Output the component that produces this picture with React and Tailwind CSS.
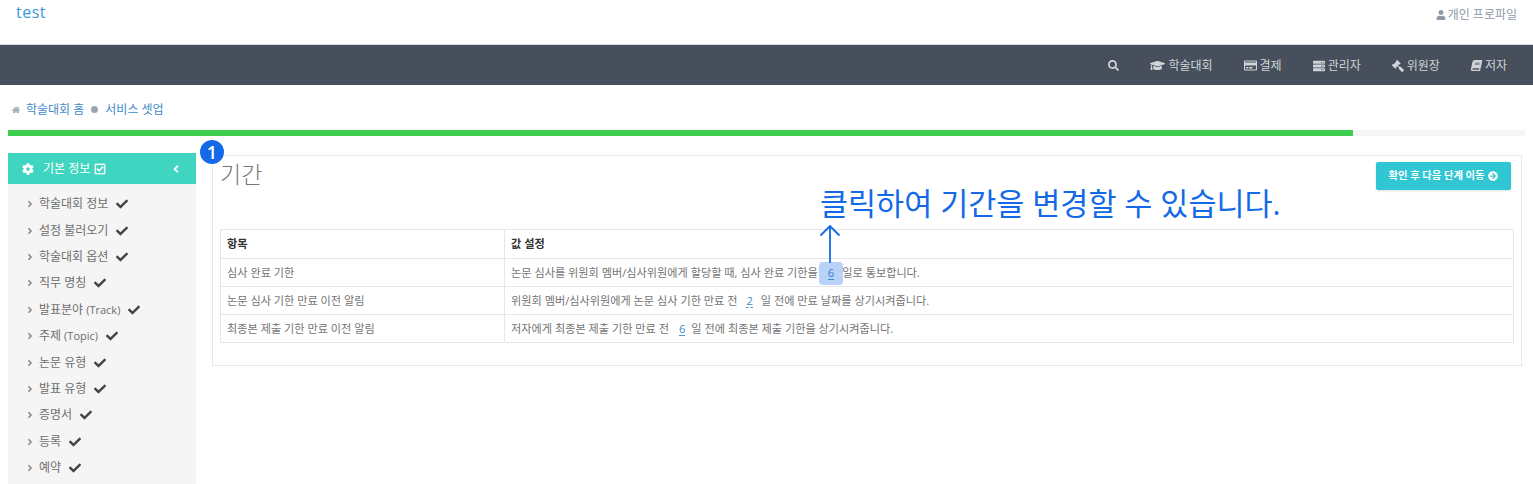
import React from "react";
import {
  FaUser,
  FaSearch,
  FaGraduationCap,
  FaRegCreditCard,
  FaServer,
  FaGavel,
  FaBook,
  FaCog,
  FaCheck,
  FaRegCheckSquare,
  FaAngleLeft,
  FaAngleRight,
  FaArrowCircleRight,
  FaHome,
} from "react-icons/fa";

const navItems = [
  { label: "학술대회", icon: FaGraduationCap, size: "text-[15px]" },
  { label: "결제", icon: FaRegCreditCard, size: "text-[13px]" },
  { label: "관리자", icon: FaServer, size: "text-[12px]" },
  { label: "위원장", icon: FaGavel, size: "text-[12px] -scale-x-100" },
  { label: "저자", icon: FaBook, size: "text-[11px] -skew-x-12" },
];

const sideItems = [
  { label: "학술대회 정보" },
  { label: "설정 불러오기" },
  { label: "학술대회 옵션" },
  { label: "직무 명칭" },
  { label: "발표분야", en: "(Track)" },
  { label: "주제", en: "(Topic)" },
  { label: "논문 유형" },
  { label: "발표 유형" },
  { label: "증명서" },
  { label: "등록" },
  { label: "예약" },
];

const Editable = ({ value, className = "" }) => (
  <span className={`inline-block border-b border-dashed border-[#3f9fd8] leading-[13px] text-[#428bca] ${className}`}>
    {value}
  </span>
);

export default function App() {
  return (
    <div className="relative h-[484px] overflow-hidden bg-white font-['Open_Sans','Noto_Sans_CJK_KR',sans-serif] text-[11px] text-[#747474]">
      {/* Top header */}
      <header className="flex h-[45px] items-start justify-between border-b border-[#dcdcdc] pl-4 pr-[16px]">
        <span className="mt-[1px] text-[16px] leading-[22px] tracking-[0.5px] text-[#3a9ad9]">test</span>
        <span className="mt-[7px] flex items-center gap-[2px] text-[12px] leading-4 text-[#8e9aa8]">
          <FaUser className="text-[10px]" />
          개인 프로파일
        </span>
      </header>

      {/* Nav bar */}
      <nav className="flex h-[40px] items-center justify-end gap-[31px] bg-[#464f5b] pr-[26px] pt-[1px] text-[#d0d4d8]">
        <FaSearch className="text-[11px]" />
        {navItems.map(({ label, icon: Icon, size }) => (
          <span key={label} className="flex items-center gap-[3px] text-[12px]">
            <Icon className={size} />
            {label}
          </span>
        ))}
      </nav>

      {/* Breadcrumb */}
      <div className="flex h-[45px] items-center pl-3 pt-[4px] text-[12px] text-[#428bca]">
        <FaHome className="mr-[6px] text-[8px] text-[#9aa4b2]" />
        학술대회 홈
        <span className="mx-[7px] h-[7px] w-[7px] rounded-full bg-[#9aa4b2]" />
        서비스 셋업
      </div>

      {/* Progress */}
      <div className="mx-2 h-[6px] bg-[#f5f5f5]">
        <div className="h-full w-[1345px] bg-[#3ecf4f]" />
      </div>

      <div className="flex gap-4 pl-2 pr-[11px] pt-[17px]">
        {/* Sidebar */}
        <aside className="h-[400px] w-[188px] shrink-0 bg-[#f5f5f5]">
          <div className="flex h-[31px] items-center bg-[#40d5c0] pl-[14px] pr-[14px] text-[12px] text-white">
            <FaCog className="mr-[9px] text-[12px]" />
            기본 정보
            <FaRegCheckSquare className="ml-[4px] text-[12px] stroke-[10px]" />
            <FaAngleLeft className="ml-auto text-[12px]" />
          </div>
          <ul className="pt-[7px]">
            {sideItems.map(({ label, en }) => (
              <li key={label} className="flex h-[26.4px] items-center pl-[17px] text-[12px] text-[#6e6e6e]">
                <FaAngleRight className="mr-[4px] text-[10px] text-[#888]" />
                {label}
                {en && <span className="ml-[3px] text-[11px]">{en}</span>}
                <FaCheck className="ml-[8px] text-[12px] text-[#444]" />
              </li>
            ))}
          </ul>
        </aside>

        {/* Panel */}
        <section className="mt-[2px] h-[211px] flex-1 border border-[#e8e8e8] px-[7px]">
          <div className="flex h-[73px] items-start justify-between">
            <h2 className="mt-[2px] text-[23px] font-light leading-[32px] text-[#777]">기간</h2>
            <button className="mr-[3px] mt-[6px] flex h-[28px] w-[135px] items-center justify-center gap-[4px] rounded-[2px] bg-[#30c6d4] text-[10.3px] font-bold text-white shadow-sm">
              확인 후 다음 단계 이동
              <FaArrowCircleRight className="text-[10px]" />
            </button>
          </div>
          <table className="w-full table-fixed border-collapse border border-[#e6e6e6] text-[11.15px]">
            <tbody>
              <tr className="h-[29px] border-b border-[#e6e6e6] font-bold text-[#333]">
                <td className="w-[284px] border-r border-[#e6e6e6] pl-[6px]">항목</td>
                <td className="pl-[6px]">값 설정</td>
              </tr>
              <tr className="h-[28px] border-b border-[#e6e6e6]">
                <td className="border-r border-[#e6e6e6] pl-[6px] pt-[2px]">심사 완료 기한</td>
                <td className="pl-[6px] pt-[2px]">
                  논문 심사를 위원회 멤버/심사위원에게 할당할 때, 심사 완료 기한을
                  <Editable value="6" className="ml-[10px] mr-[8px]" />
                  일로 통보합니다.
                </td>
              </tr>
              <tr className="h-[28px] border-b border-[#e6e6e6]">
                <td className="border-r border-[#e6e6e6] pl-[6px] pt-[2px]">논문 심사 기한 만료 이전 알림</td>
                <td className="pl-[6px] pt-[2px]">
                  위원회 멤버/심사위원에게 논문 심사 기한 만료 전
                  <Editable value="2" className="ml-[9px] mr-[8px]" />
                  일 전에 만료 날짜를 상기시켜줍니다.
                </td>
              </tr>
              <tr className="h-[28px]">
                <td className="border-r border-[#e6e6e6] pl-[6px] pt-[2px]">최종본 제출 기한 만료 이전 알림</td>
                <td className="pl-[6px] pt-[2px]">
                  저자에게 최종본 제출 기한 만료 전
                  <Editable value="6" className="ml-[10px] mr-[6px]" />
                  일 전에 최종본 제출 기한을 상기시켜줍니다.
                </td>
              </tr>
            </tbody>
          </table>
        </section>
      </div>

      {/* Tutorial overlays */}
      <span className="absolute left-[200px] top-[140px] flex h-6 w-6 items-center justify-center rounded-full bg-[#1469e8] text-[18px] font-semibold leading-none text-white">
        1
      </span>
      <span className="absolute left-[820px] top-[183px] text-[30.5px] leading-[40px] text-[#1469e8]">
        클릭하여 기간을 변경할 수 있습니다.
      </span>
      <span className="absolute left-[819px] top-[262px] h-[23px] w-[24px] rounded-[4px] bg-[#1469e8]/30" />
      <svg className="absolute left-[819px] top-[224px]" width="22" height="40" viewBox="0 0 22 40" fill="none" stroke="#1469e8" strokeWidth="1.8">
        <path d="M11 39V2M1.5 11.5L11 2l9.5 9.5" />
      </svg>
    </div>
  );
}
